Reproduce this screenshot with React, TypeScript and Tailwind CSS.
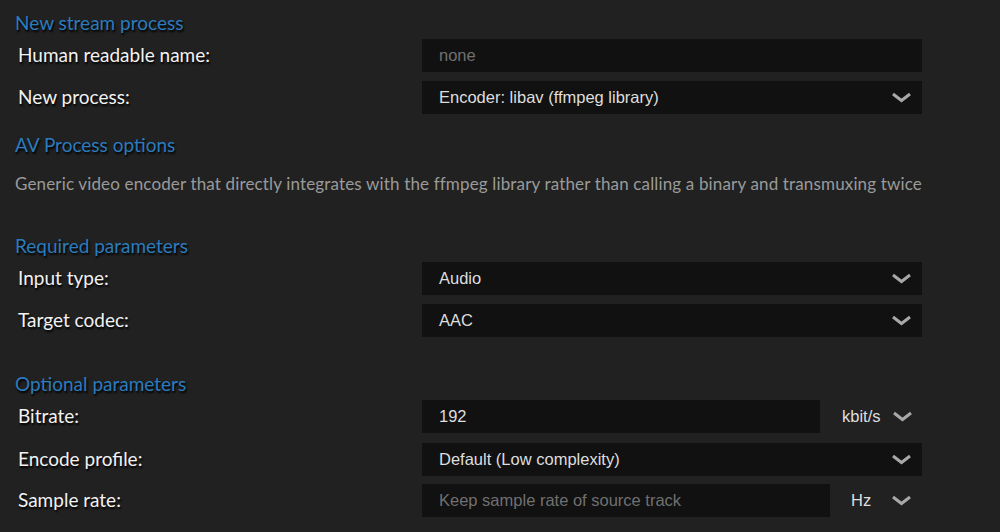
import type { ReactNode } from "react";

const labelFont = { fontFamily: "Lato, 'Open Sans', sans-serif" };

function Chevron() {
  return (
    <svg width="21" height="11" viewBox="0 0 21 11" className="shrink-0">
      <polyline
        points="2,2 10.5,8.5 19,2"
        fill="none"
        stroke="#a8a8a8"
        strokeWidth="3"
        strokeLinejoin="miter"
      />
    </svg>
  );
}

function Heading({ children, className = "" }: { children: ReactNode; className?: string }) {
  return (
    <h2
      className={`text-[19px] leading-[28px] text-[#2b7bbf] [text-shadow:1px_2px_2px_#000] ${className}`}
      style={labelFont}
    >
      {children}
    </h2>
  );
}

function Row({ label, children, className = "" }: { label: string; children: ReactNode; className?: string }) {
  return (
    <div className={`flex h-[33px] items-center ${className}`}>
      <div
        className="w-[407px] pl-[3px] text-[19px] text-[#f2f2f2] [text-shadow:1px_2px_2px_#000]"
        style={labelFont}
      >
        {label}
      </div>
      <div className="flex h-full w-[500px] items-center">{children}</div>
    </div>
  );
}

function TextBox({ value, placeholder, className = "w-full" }: { value?: string; placeholder?: string; className?: string }) {
  return (
    <div className={`flex h-full items-center bg-[#111111] pl-[17px] ${className}`}>
      {value ? (
        <span className="text-[16.5px] text-[#dedede]">{value}</span>
      ) : (
        <span className="text-[16.5px] text-[#707070]">{placeholder}</span>
      )}
    </div>
  );
}

function Select({ value }: { value: string }) {
  return (
    <div className="flex h-full w-full items-center justify-between bg-[#111111] pl-[17px] pr-[10px]">
      <span className="text-[16.5px] text-[#dedede]">{value}</span>
      <Chevron />
    </div>
  );
}

export default function App() {
  return (
    <main
      className="min-h-screen w-full bg-[#212121] pl-[15px] pt-[9px]"
      style={{ fontFamily: "'Liberation Sans', Arial, sans-serif" }}
    >
      <Heading>New stream process</Heading>
      <Row label="Human readable name:" className="mt-[2px]">
        <TextBox placeholder="none" />
      </Row>
      <Row label="New process:" className="mt-[9px]">
        <Select value="Encoder: libav (ffmpeg library)" />
      </Row>

      <Heading className="mt-[17px]">AV Process options</Heading>
      <p
        className="mt-[13px] text-[17px] leading-[24px] tracking-[0.15px] text-[#9a9a9a]"
        style={labelFont}
      >
        Generic video encoder that directly integrates with the ffmpeg library rather than calling a binary and transmuxing twice
      </p>

      <Heading className="mt-[36px]">Required parameters</Heading>
      <Row label="Input type:" className="mt-[2px]">
        <Select value="Audio" />
      </Row>
      <Row label="Target codec:" className="mt-[9px]">
        <Select value="AAC" />
      </Row>

      <Heading className="mt-[33px]">Optional parameters</Heading>
      <Row label="Bitrate:" className="mt-[2px]">
        <TextBox value="192" className="w-[398px]" />
        <span className="ml-[22px] text-[16.5px] text-[#dedede]">kbit/s</span>
        <span className="ml-[11px]">
          <Chevron />
        </span>
      </Row>
      <Row label="Encode profile:" className="mt-[10px]">
        <Select value="Default (Low complexity)" />
      </Row>
      <Row label="Sample rate:" className="mt-[8px]">
        <TextBox placeholder="Keep sample rate of source track" className="w-[408px]" />
        <span className="ml-[21px] text-[16.5px] text-[#dedede]">Hz</span>
        <span className="ml-[20px]">
          <Chevron />
        </span>
      </Row>
    </main>
  );
}
